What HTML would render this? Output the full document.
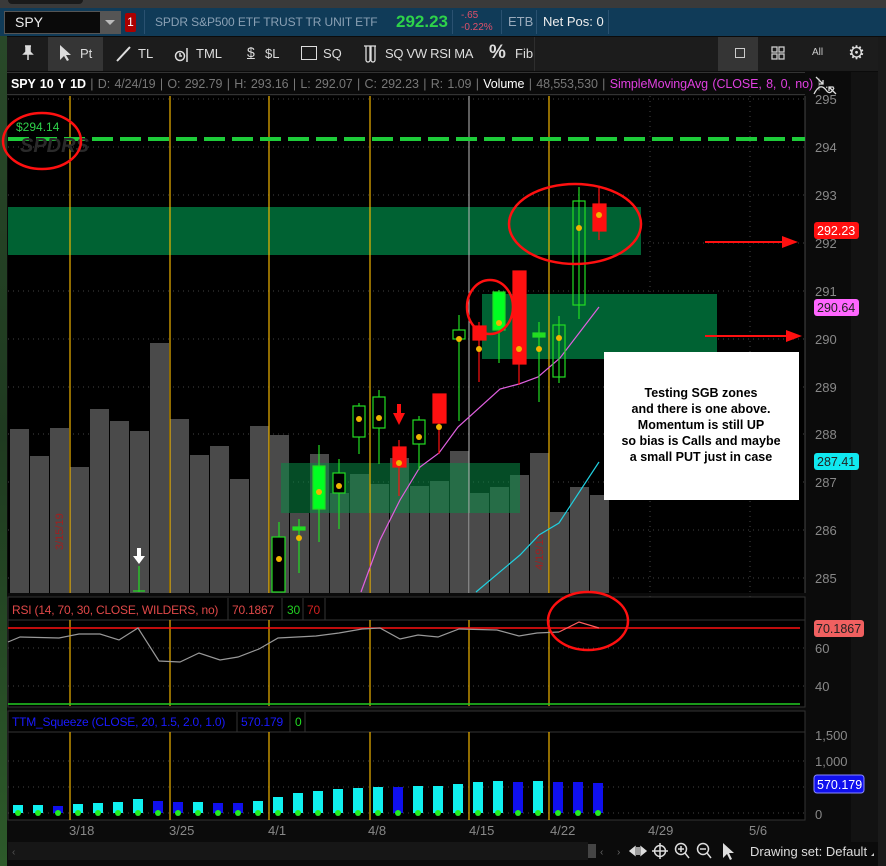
<!DOCTYPE html>
<html><head><meta charset="utf-8"><style>
*{margin:0;padding:0;box-sizing:border-box}
body{width:886px;height:866px;background:#0b0b0b;position:relative;overflow:hidden;font-family:"Liberation Sans",sans-serif;}
.a{position:absolute}
.t{font-size:13px;white-space:nowrap}
</style></head><body>
<div class="a" style="left:0;top:0;width:7px;height:866px;background:linear-gradient(#2a4a2a,#1f3a20 50%,#2d5a2a)"></div>
<div class="a" style="left:0;top:0;width:886px;height:8px;background:#3a3a3a"></div>
<div class="a" style="left:8px;top:0;width:75px;height:4px;background:#1a1a1a;border-radius:0 0 4px 4px"></div>
<div class="a" style="left:0;top:8px;width:886px;height:28px;background:#103b58"></div>
<div class="a" style="left:4px;top:11px;width:117px;height:23px;background:#0a0a0a;border:1px solid #555"></div>
<div class="a t" style="left:15px;top:14px;color:#eee;font-size:14px">SPY</div>
<div class="a" style="left:100px;top:12px;width:20px;height:21px;background:#555"></div>
<div class="a" style="left:105px;top:20px;width:0;height:0;border-left:5px solid transparent;border-right:5px solid transparent;border-top:5px solid #bbb"></div>
<div class="a" style="left:125px;top:13px;width:11px;height:19px;background:#a00;border-radius:2px;color:#fff;font-size:12px;text-align:center;line-height:19px">1</div>
<div class="a" style="left:144px;top:10px;width:1px;height:24px;background:#2a5170"></div>
<div class="a t" style="left:155px;top:15px;color:#8aa0b4;font-size:12px;letter-spacing:-0.1px">SPDR S&amp;P500 ETF TRUST TR UNIT ETF</div>
<div class="a t" style="left:396px;top:12px;color:#2ed24a;font-size:17px;font-weight:bold">292.23</div>
<div class="a" style="left:452px;top:10px;width:1px;height:24px;background:#2a5170"></div>
<div class="a t" style="left:461px;top:10px;color:#e0506a;font-size:10px">-.65</div>
<div class="a t" style="left:461px;top:22px;color:#e0506a;font-size:10px">-0.22%</div>
<div class="a" style="left:501px;top:10px;width:1px;height:24px;background:#2a5170"></div>
<div class="a t" style="left:508px;top:14px;color:#9ab">ETB</div>
<div class="a" style="left:536px;top:10px;width:1px;height:24px;background:#2a5170"></div>
<div class="a t" style="left:543px;top:14px;color:#eee">Net Pos: 0</div>
<div class="a" style="left:608px;top:10px;width:1px;height:24px;background:#2a5170"></div>
<div class="a" style="left:7px;top:37px;width:871px;height:34px;background:#1c1c1c"></div>
<div class="a" style="left:48px;top:37px;width:55px;height:34px;background:#353535"></div>
<div class="a" style="left:718px;top:37px;width:40px;height:34px;background:#353535"></div>
<svg class="a" style="left:22px;top:45px" width="12" height="16"><path d="M3 1 H9 M4 1 V7 L2 9 H10 L8 7 V1 M6 9 V15" stroke="#ddd" stroke-width="1.5" fill="#ddd"/></svg>
<svg class="a" style="left:58px;top:44px" width="14" height="18"><path d="M2 1 L2 16 L6 12 L9 17 L11 16 L8 11 L13 11 Z" fill="#ddd"/></svg>
<div class="a t" style="left:80px;top:46px;color:#ddd">Pt</div>
<svg class="a" style="left:115px;top:45px" width="18" height="18"><path d="M2 16 L15 2" stroke="#ddd" stroke-width="2"/></svg>
<div class="a t" style="left:138px;top:46px;color:#ddd">TL</div>
<svg class="a" style="left:174px;top:45px" width="18" height="18"><circle cx="6" cy="11" r="4.5" stroke="#ddd" fill="none" stroke-width="1.5"/><path d="M6 8 V11 H8 M13 3 V17" stroke="#ddd" stroke-width="1.5" fill="none"/></svg>
<div class="a t" style="left:196px;top:46px;color:#ddd">TML</div>
<div class="a t" style="left:247px;top:44px;color:#ddd;font-size:14px;text-decoration:underline">$</div>
<div class="a t" style="left:265px;top:46px;color:#ddd">$L</div>
<div class="a" style="left:301px;top:46px;width:16px;height:14px;border:1.5px solid #ddd"></div>
<div class="a t" style="left:323px;top:46px;color:#ddd">SQ</div>
<svg class="a" style="left:362px;top:44px" width="16" height="20"><path d="M2 2 H14 M4 2 V16 a2 2 0 0 0 4 0 V2 M9 2 V16 a2 2 0 0 0 4 0 V2" stroke="#ddd" fill="none" stroke-width="1.3"/></svg>
<div class="a t" style="left:385px;top:46px;color:#ddd;letter-spacing:-0.3px">SQ VW RSI MA</div>
<div class="a t" style="left:489px;top:42px;color:#ddd;font-size:19px;font-weight:bold">%</div>
<div class="a t" style="left:515px;top:46px;color:#ddd">Fib</div>
<div class="a" style="left:534px;top:37px;width:1px;height:34px;background:#2e2e2e"></div>
<div class="a" style="left:735px;top:48px;width:10px;height:10px;border:1.5px solid #ccc"></div>
<svg class="a" style="left:771px;top:46px" width="14" height="14"><g fill="none" stroke="#ccc" stroke-width="1.3"><rect x="1" y="1" width="5" height="5"/><rect x="8" y="1" width="5" height="5"/><rect x="1" y="8" width="5" height="5"/><rect x="8" y="8" width="5" height="5"/></g></svg>
<div class="a t" style="left:812px;top:47px;color:#ccc;font-size:10px">All</div>
<div class="a t" style="left:848px;top:42px;color:#ddd;font-size:19px">&#x2699;</div>
<div class="a" style="left:7px;top:72px;width:798px;height:23px;background:#0a0a0a;border-top:1px solid #333;border-bottom:1px solid #333"></div>
<div class="a t" style="left:11px;top:77px;font-size:12.5px;letter-spacing:-0.1px;word-spacing:1px;color:#777">
<span style="color:#fff;font-weight:bold">SPY 10 Y 1D</span> | D: 4/24/19 | O: 292.79 | H: 293.16 | L: 292.07 | C: 292.23 | R: 1.09 | <span style="color:#fff">Volume</span> | 48,553,530 |<span style="color:#e040e0"> SimpleMovingAvg (CLOSE, 8, 0, no)</span> | <span style="color:#ccc">...</span></div>
<div class="a" style="left:851px;top:72px;width:27px;height:770px;background:#121212"></div>
<div class="a" style="left:878px;top:37px;width:8px;height:829px;background:#1a1a1a"></div>
<svg class="a" width="886" height="866" style="left:0;top:0" font-family="Liberation Sans, sans-serif">
<rect x="8" y="96" width="797" height="497" fill="#000"/>
<g stroke="#444" stroke-dasharray="1 4">
<line x1="8" x2="805" y1="99" y2="99"/><line x1="8" x2="805" y1="147" y2="147"/><line x1="8" x2="805" y1="195" y2="195"/><line x1="8" x2="805" y1="243" y2="243"/><line x1="8" x2="805" y1="291" y2="291"/><line x1="8" x2="805" y1="339" y2="339"/><line x1="8" x2="805" y1="387" y2="387"/><line x1="8" x2="805" y1="434" y2="434"/><line x1="8" x2="805" y1="482" y2="482"/><line x1="8" x2="805" y1="530" y2="530"/><line x1="8" x2="805" y1="578" y2="578"/>
<line x1="650" x2="650" y1="96" y2="820"/><line x1="750" x2="750" y1="96" y2="820"/>
</g>
<g font-size="13" fill="#888"><text x="815" y="104">295</text><text x="815" y="152">294</text><text x="815" y="200">293</text><text x="815" y="248">292</text><text x="815" y="296">291</text><text x="815" y="344">290</text><text x="815" y="392">289</text><text x="815" y="439">288</text><text x="815" y="487">287</text><text x="815" y="535">286</text><text x="815" y="583">285</text></g>
<line x1="805" y1="96" x2="805" y2="593" stroke="#444"/>
<rect x="8" y="207" width="633" height="48" fill="#006233"/>
<rect x="482" y="294" width="235" height="65" fill="#006233"/>
<g fill="#4a4a4a">
<rect x="10" y="429" width="19" height="164"/><rect x="30" y="456" width="19" height="137"/><rect x="50" y="428" width="19" height="165"/><rect x="70" y="467" width="19" height="126"/><rect x="90" y="409" width="19" height="184"/><rect x="110" y="421" width="19" height="172"/><rect x="130" y="431" width="19" height="162"/><rect x="150" y="343" width="19" height="250"/><rect x="170" y="419" width="19" height="174"/><rect x="190" y="455" width="19" height="138"/><rect x="210" y="446" width="19" height="147"/><rect x="230" y="479" width="19" height="114"/><rect x="250" y="426" width="19" height="167"/><rect x="270" y="435" width="19" height="158"/><rect x="290" y="513" width="19" height="80"/><rect x="310" y="454" width="19" height="139"/><rect x="330" y="493" width="19" height="100"/><rect x="350" y="474" width="19" height="119"/><rect x="370" y="484" width="19" height="109"/><rect x="390" y="458" width="19" height="135"/><rect x="410" y="486" width="19" height="107"/><rect x="430" y="481" width="19" height="112"/><rect x="450" y="451" width="19" height="142"/><rect x="470" y="493" width="19" height="100"/><rect x="490" y="487" width="19" height="106"/><rect x="510" y="475" width="19" height="118"/><rect x="530" y="453" width="19" height="140"/><rect x="550" y="512" width="19" height="81"/><rect x="570" y="487" width="19" height="106"/><rect x="590" y="495" width="19" height="98"/>
</g>
<rect x="281" y="463" width="239" height="50" fill="#0a8a45" opacity="0.55"/>
<g stroke="#f0b400" stroke-width="1.2"><line x1="70" x2="70" y1="96" y2="593"/><line x1="170" x2="170" y1="96" y2="593"/><line x1="269" x2="269" y1="96" y2="593"/><line x1="370" x2="370" y1="96" y2="593"/><line x1="549" x2="549" y1="96" y2="593"/></g>
<line x1="469" x2="469" y1="96" y2="593" stroke="#bbb"/>
<text transform="translate(63,550) rotate(-90)" font-size="11" fill="#a02020">3/15/19</text>
<text transform="translate(543,570) rotate(-90)" font-size="11" fill="#a02020">4/19/19</text>
<line x1="8" x2="805" y1="139" y2="139" stroke="#1ecc3a" stroke-width="4" stroke-dasharray="21 7"/>
<text x="16" y="131" font-size="12" fill="#2ed24a">$294.14</text>
<text x="20" y="152" font-size="20" font-weight="bold" fill="#2a2a2a" font-style="italic">SPDRS</text>
<polyline points="361,592 380,540 400,500 420,467 439,453 458,427 500,389 519,384 538,377 560,358 599,307" fill="none" stroke="#e060e0" stroke-width="1.2"/>
<polyline points="476,592 520,555 539,535 559,523 599,462" fill="none" stroke="#20d0e0" stroke-width="1.2"/>
<g stroke="#22dd22" stroke-width="1.2" fill="none">
<line x1="139" x2="139" y1="566" y2="592"/><line x1="133" x2="145" y1="591" y2="591"/>
<line x1="279" x2="279" y1="522" y2="592"/><rect x="272" y="537" width="13" height="55" fill="#000"/>
<line x1="299" x2="299" y1="519" y2="573"/><rect x="293" y="527" width="12" height="3" fill="#22dd22"/>
<line x1="319" x2="319" y1="445" y2="542"/><rect x="313" y="466" width="12" height="43" fill="#00ff22"/>
<line x1="339" x2="339" y1="459" y2="529"/><rect x="333" y="473" width="12" height="20" fill="#000"/>
<line x1="359" x2="359" y1="403" y2="454"/><rect x="353" y="406" width="12" height="31" fill="#000"/>
<line x1="379" x2="379" y1="390" y2="464"/><rect x="373" y="397" width="12" height="31" fill="#000"/>
<line x1="419" x2="419" y1="416" y2="470"/><rect x="413" y="420" width="12" height="24" fill="#000"/>
<line x1="459" x2="459" y1="315" y2="421"/><rect x="453" y="330" width="12" height="9" fill="#000"/>
<line x1="499" x2="499" y1="290" y2="363"/><rect x="493" y="292" width="12" height="38" fill="#00ff22"/>
<line x1="539" x2="539" y1="322" y2="402"/><rect x="533" y="333" width="12" height="4" fill="#22dd22"/>
<line x1="559" x2="559" y1="316" y2="383"/><rect x="553" y="325" width="12" height="52" fill="none"/>
<line x1="579" x2="579" y1="187" y2="319"/><rect x="573" y="201" width="12" height="104" fill="none"/>
</g>
<g stroke="#ff1010" stroke-width="1.2" fill="#ff1010">
<line x1="399" x2="399" y1="440" y2="496"/><rect x="393" y="447" width="13" height="20"/>
<line x1="439" x2="439" y1="394" y2="454"/><rect x="433" y="394" width="13" height="29"/>
<line x1="479" x2="479" y1="322" y2="382"/><rect x="473" y="326" width="13" height="14"/>
<line x1="519" x2="519" y1="271" y2="385"/><rect x="513" y="271" width="13" height="93"/>
<line x1="599" x2="599" y1="186" y2="240"/><rect x="593" y="204" width="13" height="27"/>
</g>
<path d="M397 404 H401 V413 H405 L399 425 L393 413 H397 Z" fill="#ff1010"/>
<path d="M137 548 H141 V556 H145 L139 564 L133 556 H137 Z" fill="#fff"/>
<g fill="#f0b400"><circle cx="279" cy="559" r="3"/><circle cx="299" cy="538" r="3"/><circle cx="319" cy="492" r="3"/><circle cx="339" cy="486" r="3"/><circle cx="359" cy="419" r="3"/><circle cx="379" cy="418" r="3"/><circle cx="399" cy="463" r="3"/><circle cx="419" cy="437" r="3"/><circle cx="439" cy="427" r="3"/><circle cx="459" cy="339" r="3"/><circle cx="479" cy="349" r="3"/><circle cx="499" cy="323" r="3"/><circle cx="519" cy="349" r="3"/><circle cx="539" cy="349" r="3"/><circle cx="559" cy="338" r="3"/><circle cx="579" cy="228" r="3"/><circle cx="599" cy="215" r="3"/></g>
<g fill="none" stroke="#ff1010" stroke-width="2.5">
<ellipse cx="42" cy="141" rx="39" ry="28"/>
<ellipse cx="575" cy="224" rx="66" ry="40"/>
<ellipse cx="490" cy="307" rx="23" ry="27"/>
</g>
<line x1="705" x2="782" y1="242" y2="242" stroke="#ff1010" stroke-width="2"/><path d="M782 236 L798 242 L782 248 Z" fill="#ff1010"/>
<line x1="705" x2="786" y1="336" y2="336" stroke="#ff1010" stroke-width="2"/><path d="M786 330 L802 336 L786 342 Z" fill="#ff1010"/>
<rect x="604" y="352" width="195" height="148" fill="#fff"/>
<g font-size="12.5" font-weight="bold" fill="#000" text-anchor="middle"><text x="701" y="397">Testing SGB zones</text><text x="701" y="413">and there is one above.</text><text x="701" y="429">Momentum is still UP</text><text x="701" y="445">so bias is Calls and maybe</text><text x="701" y="461">a small PUT just in case</text></g>
<rect x="814" y="222" width="45" height="17" rx="3" fill="#ff1010"/><text x="817" y="235" font-size="12.5" fill="#fff">292.23</text>
<rect x="814" y="299" width="45" height="17" rx="3" fill="#ff66ff"/><text x="817" y="312" font-size="12.5" fill="#222">290.64</text>
<rect x="814" y="453" width="45" height="17" rx="3" fill="#10e8f0"/><text x="817" y="466" font-size="12.5" fill="#222">287.41</text>
<g stroke="#ddd" stroke-width="1.3" fill="none"><path d="M816 77 L823 84 M819 84 H823 V80"/><path d="M814 94 Q820 82 826 90 Q830 96 834 88"/><path d="M836 94 L829 87 M833 87 H829 V91"/></g>
<rect x="8" y="597" width="797" height="110" fill="#000" stroke="#333"/>
<line x1="8" x2="805" y1="620" y2="620" stroke="#333"/>
<g font-size="12" letter-spacing="-0.2"><text x="12" y="614" fill="#e04848">RSI (14, 70, 30, CLOSE, WILDERS, no)</text><text x="232" y="614" fill="#e04848">70.1867</text><text x="287" y="614" fill="#22cc22">30</text><text x="307" y="614" fill="#d02020">70</text></g>
<g stroke="#333"><line x1="228" x2="228" y1="598" y2="620"/><line x1="282" x2="282" y1="598" y2="620"/><line x1="303" x2="303" y1="598" y2="620"/><line x1="325" x2="325" y1="598" y2="620"/></g>
<g stroke="#444" stroke-dasharray="1 4"><line x1="8" x2="805" y1="648" y2="648"/><line x1="8" x2="805" y1="686" y2="686"/></g>
<g stroke="#f0b400" stroke-width="1.2"><line x1="70" x2="70" y1="620" y2="706"/><line x1="170" x2="170" y1="620" y2="706"/><line x1="269" x2="269" y1="620" y2="706"/><line x1="370" x2="370" y1="620" y2="706"/><line x1="469" x2="469" y1="620" y2="706"/><line x1="549" x2="549" y1="620" y2="706"/></g>
<line x1="8" x2="800" y1="628" y2="628" stroke="#ff1010" stroke-width="1.5"/>
<line x1="8" x2="800" y1="704" y2="704" stroke="#22cc22" stroke-width="1.5"/>
<polyline points="8,642 20,637 59,638 79,634 100,634 119,640 138,628 159,661 180,662 199,653 220,660 238,657 259,649 278,638 316,636 339,633 362,629 380,628 400,639 418,635 438,637 459,629 497,630 519,636 537,633 559,632" fill="none" stroke="#999" stroke-width="1.2"/>
<polyline points="559,632 579,622 599,628" fill="none" stroke="#ff6060" stroke-width="1.2"/>
<ellipse cx="588" cy="621" rx="40" ry="29" fill="none" stroke="#ff1010" stroke-width="2.5"/>
<g font-size="13" fill="#888"><text x="815" y="653">60</text><text x="815" y="691">40</text></g>
<rect x="814" y="620" width="50" height="17" rx="3" fill="#f06060"/><text x="816" y="633" font-size="12.5" fill="#222">70.1867</text>
<rect x="8" y="711" width="797" height="109" fill="#000" stroke="#333"/>
<line x1="8" x2="805" y1="732" y2="732" stroke="#333"/>
<g font-size="12" letter-spacing="-0.2"><text x="12" y="726" fill="#1a1aff">TTM_Squeeze (CLOSE, 20, 1.5, 2.0, 1.0)</text><text x="241" y="726" fill="#1a1aff">570.179</text><text x="295" y="726" fill="#22dd22">0</text></g>
<g stroke="#333"><line x1="237" x2="237" y1="712" y2="732"/><line x1="290" x2="290" y1="712" y2="732"/><line x1="305" x2="305" y1="712" y2="732"/></g>
<g stroke="#444" stroke-dasharray="1 4"><line x1="8" x2="805" y1="761" y2="761"/><line x1="8" x2="805" y1="787" y2="787"/><line x1="8" x2="805" y1="813" y2="813"/></g>
<g stroke="#f0b400" stroke-width="1.2"><line x1="70" x2="70" y1="732" y2="820"/><line x1="170" x2="170" y1="732" y2="820"/><line x1="269" x2="269" y1="732" y2="820"/><line x1="370" x2="370" y1="732" y2="820"/><line x1="469" x2="469" y1="732" y2="820"/><line x1="549" x2="549" y1="732" y2="820"/></g>
<g>
<rect x="13" y="805" width="10" height="8" fill="#10f0f0"/><rect x="33" y="805" width="10" height="8" fill="#10f0f0"/><rect x="53" y="806" width="10" height="7" fill="#1010ee"/><rect x="73" y="804" width="10" height="9" fill="#10f0f0"/><rect x="93" y="803" width="10" height="10" fill="#10f0f0"/><rect x="113" y="802" width="10" height="11" fill="#10f0f0"/><rect x="133" y="799" width="10" height="14" fill="#10f0f0"/><rect x="153" y="801" width="10" height="12" fill="#1010ee"/><rect x="173" y="802" width="10" height="11" fill="#1010ee"/><rect x="193" y="802" width="10" height="11" fill="#10f0f0"/><rect x="213" y="803" width="10" height="10" fill="#1010ee"/><rect x="233" y="803" width="10" height="10" fill="#1010ee"/><rect x="253" y="801" width="10" height="12" fill="#10f0f0"/><rect x="273" y="797" width="10" height="16" fill="#10f0f0"/><rect x="293" y="793" width="10" height="20" fill="#10f0f0"/><rect x="313" y="791" width="10" height="22" fill="#10f0f0"/><rect x="333" y="789" width="10" height="24" fill="#10f0f0"/><rect x="353" y="788" width="10" height="25" fill="#10f0f0"/><rect x="373" y="787" width="10" height="26" fill="#10f0f0"/><rect x="393" y="787" width="10" height="26" fill="#1010ee"/><rect x="413" y="786" width="10" height="27" fill="#10f0f0"/><rect x="433" y="786" width="10" height="27" fill="#10f0f0"/><rect x="453" y="784" width="10" height="29" fill="#10f0f0"/><rect x="473" y="782" width="10" height="31" fill="#10f0f0"/><rect x="493" y="781" width="10" height="32" fill="#10f0f0"/><rect x="513" y="782" width="10" height="31" fill="#1010ee"/><rect x="533" y="781" width="10" height="32" fill="#10f0f0"/><rect x="553" y="782" width="10" height="31" fill="#1010ee"/><rect x="573" y="782" width="10" height="31" fill="#1010ee"/><rect x="593" y="783" width="10" height="30" fill="#1010ee"/>
</g>
<g fill="#22ee22"><circle cx="18" cy="813" r="3"/><circle cx="38" cy="813" r="3"/><circle cx="58" cy="813" r="3"/><circle cx="78" cy="813" r="3"/><circle cx="98" cy="813" r="3"/><circle cx="118" cy="813" r="3"/><circle cx="138" cy="813" r="3"/><circle cx="158" cy="813" r="3"/><circle cx="178" cy="813" r="3"/><circle cx="198" cy="813" r="3"/><circle cx="218" cy="813" r="3"/><circle cx="238" cy="813" r="3"/><circle cx="258" cy="813" r="3"/><circle cx="278" cy="813" r="3"/><circle cx="298" cy="813" r="3"/><circle cx="318" cy="813" r="3"/><circle cx="338" cy="813" r="3"/><circle cx="358" cy="813" r="3"/><circle cx="378" cy="813" r="3"/><circle cx="398" cy="813" r="3"/><circle cx="418" cy="813" r="3"/><circle cx="438" cy="813" r="3"/><circle cx="458" cy="813" r="3"/><circle cx="478" cy="813" r="3"/><circle cx="498" cy="813" r="3"/><circle cx="518" cy="813" r="3"/><circle cx="538" cy="813" r="3"/><circle cx="558" cy="813" r="3"/><circle cx="578" cy="813" r="3"/><circle cx="598" cy="813" r="3"/></g>
<g font-size="13" fill="#888"><text x="815" y="740">1,500</text><text x="815" y="766">1,000</text><text x="815" y="819">0</text></g>
<rect x="814" y="775" width="50" height="18" rx="3" fill="#1010ee" stroke="#88f"/><text x="817" y="789" font-size="12.5" fill="#fff">570.179</text>
<g font-size="13" fill="#888"><text x="69" y="835">3/18</text><text x="169" y="835">3/25</text><text x="268" y="835">4/1</text><text x="368" y="835">4/8</text><text x="469" y="835">4/15</text><text x="550" y="835">4/22</text><text x="648" y="835">4/29</text><text x="749" y="835">5/6</text></g>
<rect x="8" y="842" width="580" height="18" fill="#161616"/>
<rect x="588" y="844" width="8" height="14" fill="#444"/>
<text x="12" y="855" font-size="10" fill="#555">‹</text><text x="600" y="855" font-size="10" fill="#666">‹</text><text x="617" y="855" font-size="10" fill="#666">›</text>
<g fill="#ddd" stroke="#ddd" stroke-width="1.4"><path d="M630 851 L635 847 V855 Z M646 851 L641 847 V855 Z"/><line x1="637" x2="637" y1="847" y2="855"/><line x1="639" x2="639" y1="847" y2="855"/></g>
<g fill="none" stroke="#ddd" stroke-width="1.5"><circle cx="660" cy="851" r="5.5"/><path d="M660 843 V859 M652 851 H668"/><circle cx="681" cy="849" r="5.5"/><path d="M685 853 L689 858 M678 849 H684 M681 846 V852"/><circle cx="703" cy="849" r="5.5"/><path d="M707 853 L711 858 M700 849 H706"/></g>
<path d="M723 843 V858 L727 854 L730 860 L732 859 L729 853 L734 853 Z" fill="#ddd"/>
<text x="750" y="856" font-size="13" fill="#ddd">Drawing set: Default</text>
<path d="M871 856 L874 853 V856 Z" fill="#ccc"/>
</svg>
</body></html>
